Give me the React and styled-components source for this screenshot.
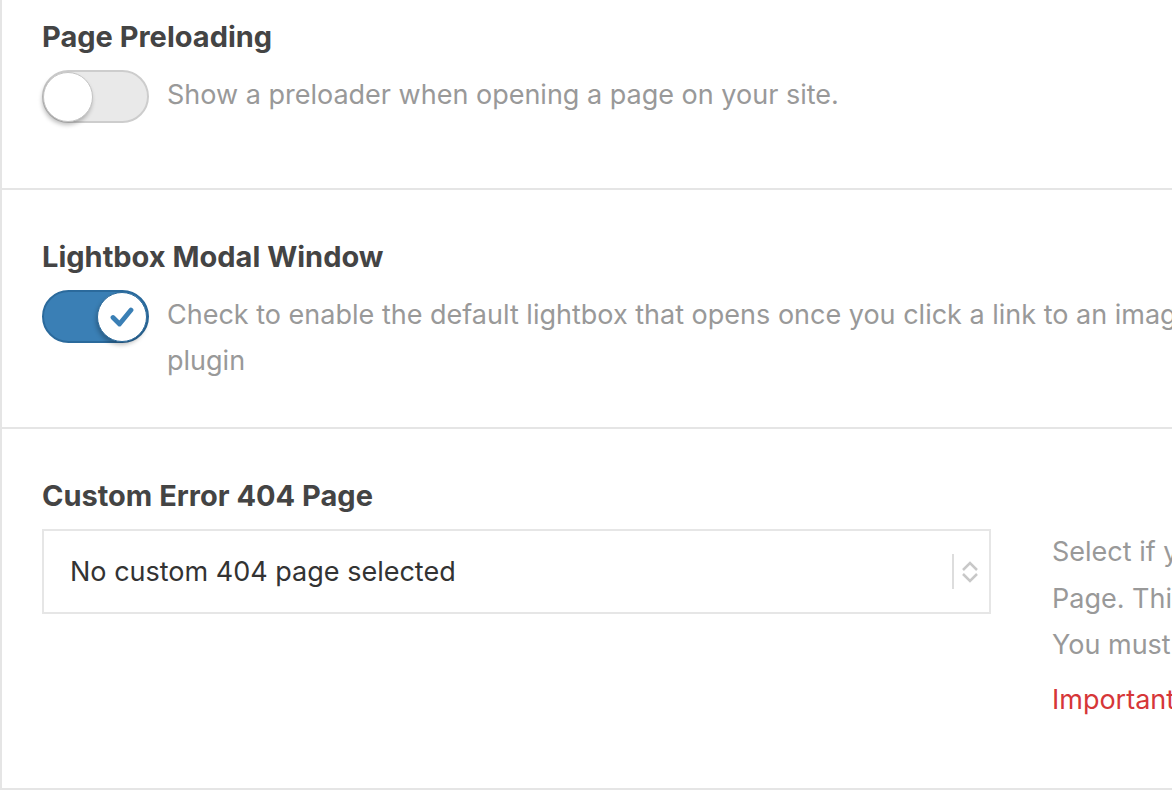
import styled, { createGlobalStyle } from "styled-components";

const GlobalStyle = createGlobalStyle`
  body {
    margin: 0;
    background: #fff;
    overflow: hidden;
    font-family: Inter, "Liberation Sans", sans-serif;
  }
`;

const Page = styled.div`
  width: 1500px;
  margin-top: -30px;
  border-left: 2px solid #e5e5e5;
`;

const Section = styled.section`
  padding: 50px 0 ${(p) => p.$pb}px 40px;
  border-bottom: 2px solid #e5e5e5;
`;

const Title = styled.h3`
  margin: 0 0 ${(p) => p.$mb ?? 18}px 0;
  font-size: 29px;
  font-weight: 700;
  line-height: 34px;
  color: #444;
`;

const Row = styled.div`
  display: flex;
  align-items: flex-start;
  gap: 18px;
`;

const Track = styled.div`
  position: relative;
  flex: none;
  width: 107px;
  height: 53px;
  margin-top: -2px;
  box-sizing: border-box;
  border-radius: 27px;
  border: 2px solid ${(p) => (p.$on ? "#2b6a9c" : "#cdcdcd")};
  background: ${(p) => (p.$on ? "#3a7fb5" : "#e9e9e9")};
`;

const Knob = styled.div`
  position: absolute;
  top: 0;
  left: ${(p) => (p.$on ? "53px" : "-1px")};
  width: 50px;
  height: 50px;
  box-sizing: border-box;
  border-radius: 50%;
  background: #fff;
  border: 1px solid ${(p) => (p.$on ? "#2b6a9c" : "#c4c4c4")};
  box-shadow: -1px 3px 4px rgba(0, 0, 0, 0.25);
  display: flex;
  align-items: center;
  justify-content: center;
`;

const Desc = styled.p`
  margin: 0;
  font-size: 27px;
  line-height: 46px;
  color: #999;
  white-space: nowrap;
`;

const FieldRow = styled.div`
  display: flex;
  align-items: flex-start;
  gap: 61px;
`;

const Select = styled.div`
  flex: none;
  width: 949px;
  height: 85px;
  box-sizing: border-box;
  border: 2px solid #e6e6e6;
  display: flex;
  align-items: center;
  padding: 0 11px 0 26px;
  font-size: 27px;
  color: #333;
`;

const SelectText = styled.span`
  flex: 1;
`;

const Divider = styled.span`
  width: 2px;
  height: 35px;
  background: #ddd;
  margin-right: 8px;
`;

const Help = styled.div`
  font-size: 27px;
  line-height: 46.5px;
  color: #999;
  white-space: nowrap;
`;

const HelpP = styled.p`
  margin: 0 0 ${(p) => (p.$warn ? 0 : 8)}px 0;
  color: ${(p) => (p.$warn ? "#d63638" : "#999")};
`;

function Toggle({ on }) {
  return (
    <Track $on={on}>
      <Knob $on={on}>
        {on && (
          <svg width="24" height="22" viewBox="0 0 24 22">
            <path
              d="M3 11.5 L9.5 18 L21 4"
              fill="none"
              stroke="#3a7fb5"
              strokeWidth="4.8"
              strokeLinecap="round"
              strokeLinejoin="round"
            />
          </svg>
        )}
      </Knob>
    </Track>
  );
}

function Chevrons() {
  return (
    <svg width="16" height="26" viewBox="0 0 16 26">
      <path d="M1 11 L8 4 L15 11" fill="none" stroke="#c8c8c8" strokeWidth="2.5" />
      <path d="M1 15 L8 22 L15 15" fill="none" stroke="#c8c8c8" strokeWidth="2.5" />
    </svg>
  );
}

export default function App() {
  return (
    <>
      <GlobalStyle />
      <Page>
        <Section $pb={65}>
          <Title>Page Preloading</Title>
          <Row>
            <Toggle on={false} />
            <Desc>Show a preloader when opening a page on your site.</Desc>
          </Row>
        </Section>
        <Section $pb={43}>
          <Title>Lightbox Modal Window</Title>
          <Row>
            <Toggle on />
            <Desc>
              Check to enable the default lightbox that opens once you click a link to an image. Disable it if you use another lightbox
              <br />
              plugin
            </Desc>
          </Row>
        </Section>
        <Section $pb={65}>
          <Title $mb={16}>Custom Error 404 Page</Title>
          <FieldRow>
            <Select>
              <SelectText>No custom 404 page selected</SelectText>
              <Divider />
              <Chevrons />
            </Select>
            <Help>
              <HelpP>
                Select if you want to use a custom page for your Error 404
                <br />
                Page. This page will be shown instead of the default one.
                <br />
                You must publish the selected page first.
              </HelpP>
              <HelpP $warn>Important: the page must not be set as your homepage.</HelpP>
            </Help>
          </FieldRow>
        </Section>
      </Page>
    </>
  );
}
